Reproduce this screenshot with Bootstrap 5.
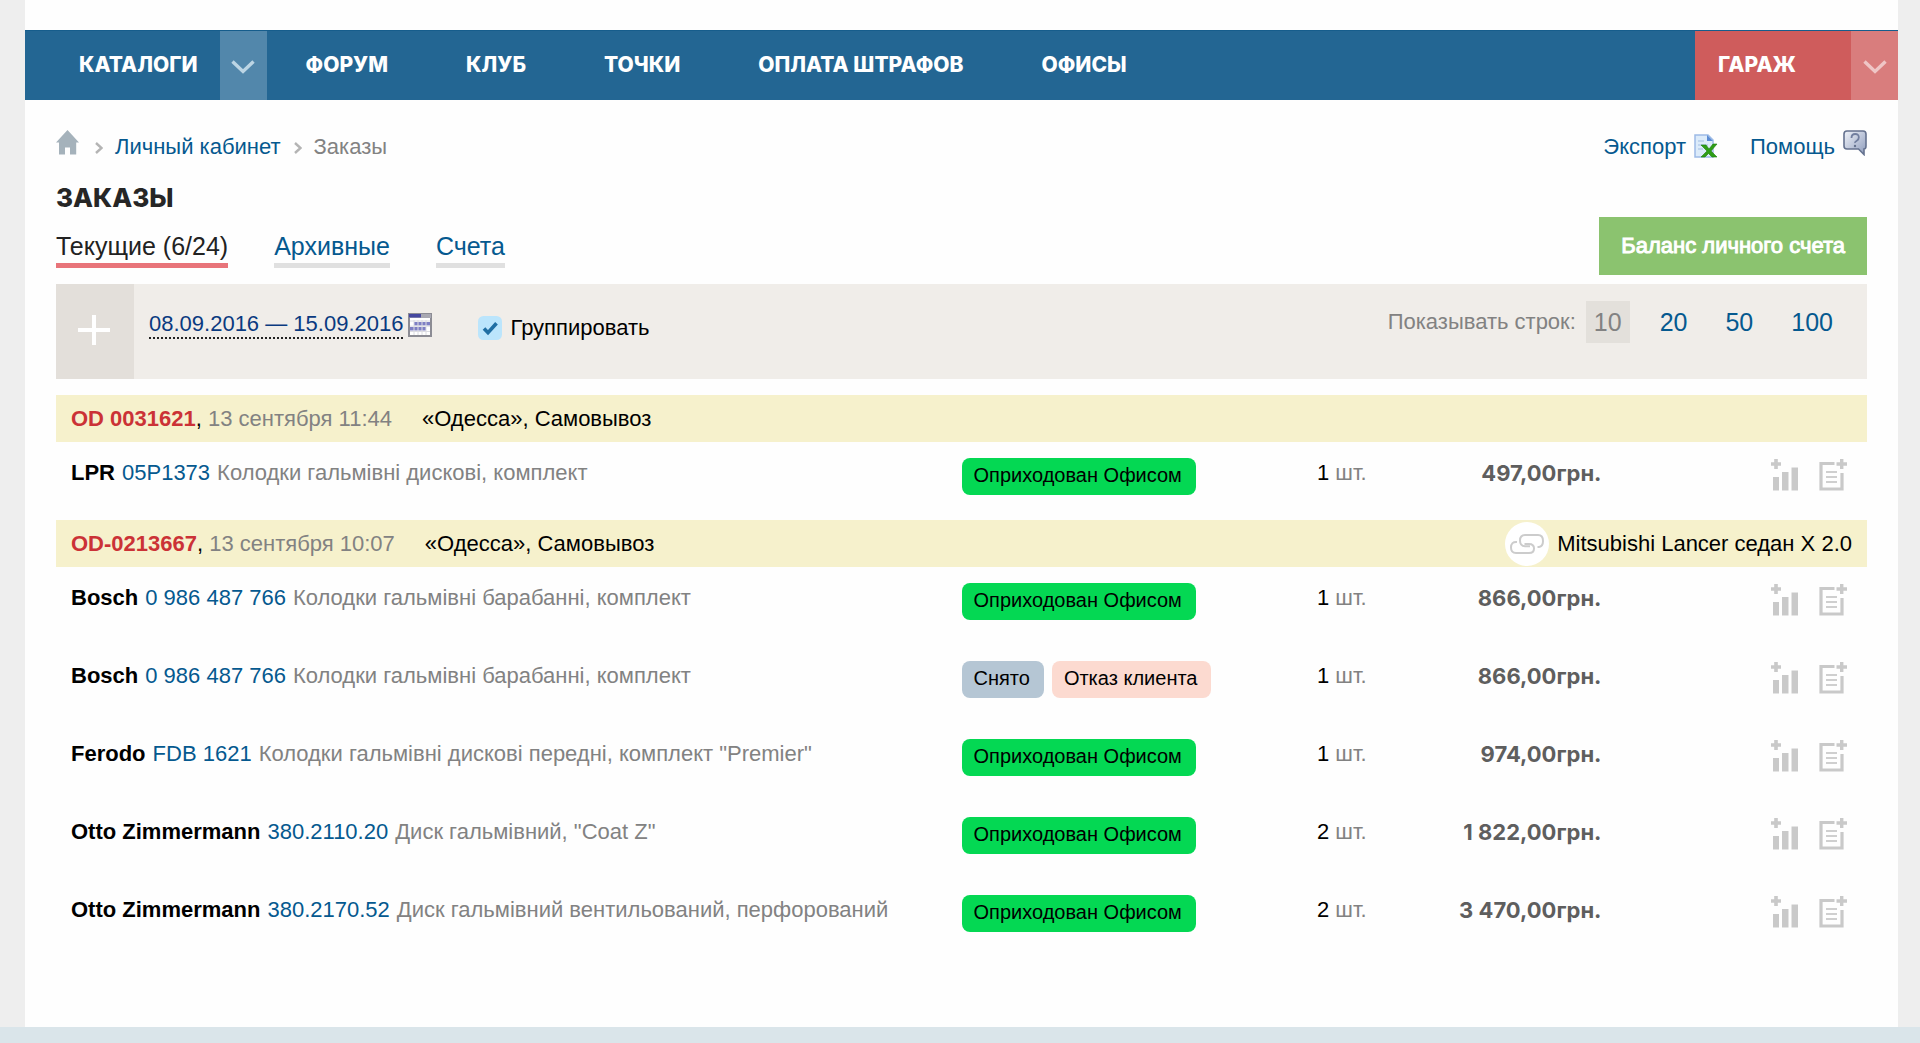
<!DOCTYPE html>
<html lang="ru">
<head>
<meta charset="utf-8">
<meta name="viewport" content="width=device-width, initial-scale=1">
<title>Заказы</title>
<link href="https://cdn.jsdelivr.net/npm/bootstrap@5.3.0/dist/css/bootstrap.min.css" rel="stylesheet">
<style>
:root{--blue:#236693;--link:#05598f;--muted:#828282}
body{background:#eee;font-family:"Liberation Sans",Arial,sans-serif;font-size:22px;line-height:30px;color:#000}
a{color:var(--link);text-decoration:none}
.sheet{background:#fefefe;margin:0 22px 0 25px;padding-top:30px}
.display-font{font-family:Inter,Roboto,sans-serif;font-weight:800}
/* main menu */
.mainmenu{background:var(--blue);height:70px;border-top:1px solid #165d8c;font-size:21px}
.mainmenu a{color:#fff;display:flex;align-items:center;padding:0 39px 1px}
.mainmenu a.first-item{padding-left:54px;padding-right:22px}
.mainmenu button{width:47px;border:0;padding:2px 0 0;color:#bcd5e4;background:#5287ab}
.mainmenu .garage{background:#cf5c5c;width:203px}
.mainmenu .garage a{padding:0 0 1px 23px}
.mainmenu .garage button{background:#d97d7d;color:#efc6c6}
.content-area{padding:0 31px 70px}
.crumbs{padding-top:24px;line-height:30px}
.crumbs .sep{margin:12px 12px 0 13px}
.crumbs .raised{margin-top:6px}
.muted-text{color:var(--muted)}
.heading{font-size:26px;line-height:32px;margin:20px 0 17px;color:#262626}
.tabs-line{gap:46px;font-size:25px;line-height:30px;margin-bottom:7px}
.tabs-line a{border-bottom:5px solid #e0e0e0;padding-bottom:2px}
.tabs-line a.current{border-color:#e8747a;color:#222}
.btn-balance{background:#8bc36f;color:#fff;border:0;border-radius:0;font-size:22px;line-height:34px;padding:12px 22px;-webkit-text-stroke:1px #fff}
.btn-balance:hover{background:#7cb65f;color:#fff}
/* filter strip */
.filterbar{background:#f0ede9;min-height:95px;margin-top:9px}
.filterbar .addbtn{width:78px;border:0;background:#e3dfda;padding:0 2px 2px 0}
.filter-body{padding:17px 26px 0 15px}
.daterange{gap:5px;padding-top:10px}
.datelink{color:#0a3a80;border-bottom:2px dotted #222;line-height:26px}
.grouping{margin-left:46px;gap:8px;padding-top:12px}
.grouping input{width:24px;height:24px;margin:0;border:0;border-radius:0;background-color:#bbe5fc;box-shadow:none}
.grouping input:checked{background-color:#bbe5fc;background-image:url("data:image/svg+xml,%3csvg xmlns='http://www.w3.org/2000/svg' viewBox='0 0 24 24'%3e%3cpath fill='none' stroke='%231f6ea3' stroke-width='3.6' d='M6 12.5l4 4.2 8.500-9.500'/%3e%3c/svg%3e");background-size:contain}
.pager{gap:10px}
.rowcount{gap:22px;font-size:25px;line-height:42px}
.rowcount a,.rowcount span{padding:0 8px}
.rowcount .active-count{background:#e3e0db;color:var(--muted)}
/* orders */
.orders{table-layout:fixed;width:100%;margin-top:16px}
.orders .ordhead td{background:#f6f1cc;height:47px;padding:0 15px;vertical-align:middle}
.ordhead .num{font-weight:700;color:#cb3236}
.ordhead .when{color:var(--muted);margin-right:30px}
.linkdot{width:44px;height:44px;border-radius:50%;background:#fff}
.orders .item td{height:78px;padding:16px 0 0;vertical-align:top}
.orders .item td:first-child{padding-left:15px}
.item .name{gap:7px}
.item td.price{padding-right:12px;text-align:right;color:#5e5e5e;line-height:30px;font-weight:700}
.orders .item td.tools{padding-top:17px;padding-right:20px}
.tools div{gap:20px}
.tools button{border:0;background:none;padding:0}
.orders .item td.price{padding-right:12px}
.state{display:inline-block;border-radius:8px;font-size:20px;line-height:23px;padding:6px 14px 8px 12px}
.st-in{background:#04d853}.st-off{background:#b5c6d4}.st-no{background:#fcdad0}
.footer-strip{height:16px;background:#dae5ea}
svg{display:block;flex:none}
</style>
</head>
<body class="d-flex flex-column min-vh-100">
<svg width="0" height="0" class="position-absolute" aria-hidden="true">
  <defs>
    <symbol id="i-chev" viewBox="0 0 24 14"><path d="M1.500 1.500l10.500 10 10.500-10" fill="none" stroke="currentColor" stroke-width="3.400"/></symbol>
    <symbol id="i-sep" viewBox="0 0 8 12"><path d="M1 1l5.500 5L1 11" fill="none" stroke="#b4b4b4" stroke-width="2.400"/></symbol>
    <symbol id="i-bars" viewBox="0 0 28 32"><g fill="#c9c9c9"><path d="M3.200 0h3.600v3.200H10v3.600H6.800V10H3.200V6.800H0V3.200h3.200z"/><path d="M2 18h6v13.500H2zM11 13h6.500v18.500H11zM20.500 8.500h6.500v23h-6.500z"/></g></symbol>
    <symbol id="i-note" viewBox="0 0 28 32"><path d="M15.500 4.500h-13.500v25.500h21V14" fill="none" stroke="#c9c9c9" stroke-width="3.200"/><path d="M21 0h3.400v3.300H28v3.400h-3.600V10H21V6.700h-3.500V3.300H21z" fill="#c9c9c9"/><path d="M7 13h11M7 18h11M7 23h11" stroke="#cfcfcf" stroke-width="2"/></symbol>
  </defs>
</svg>

<div class="sheet flex-grow-1">
  <nav class="mainmenu display-font d-flex justify-content-between" aria-label="Главное меню">
    <div class="d-flex">
      <a class="first-item" href="#">КАТАЛОГИ</a>
      <button type="button" aria-label="Разделы каталога" class="d-flex align-items-center justify-content-center"><svg width="24" height="14"><use href="#i-chev"/></svg></button>
      <a href="#">ФОРУМ</a><a href="#">КЛУБ</a><a href="#">ТОЧКИ</a><a href="#">ОПЛАТА ШТРАФОВ</a><a href="#">ОФИСЫ</a>
    </div>
    <div class="garage d-flex justify-content-between">
      <a href="#">ГАРАЖ</a>
      <button type="button" aria-label="Открыть гараж" class="d-flex align-items-center justify-content-center"><svg width="24" height="14"><use href="#i-chev"/></svg></button>
    </div>
  </nav>

  <main class="content-area">
    <div class="crumbs d-flex justify-content-between">
      <nav class="d-flex align-items-start" aria-label="Навигация">
        <a href="#" aria-label="Главная"><svg width="23" height="25" viewBox="0 0 23 25" class="raised"><path d="M11.500 0L23 12.500h-2.800V24.500h-6.200v-7H9v7H3V12.500H0z" fill="#a5b2bb"/></svg></a>
        <svg class="sep ms-3" width="8" height="24" viewBox="0 -6 8 24"><use href="#i-sep" width="8" height="12"/></svg>
        <a href="#" class="pt-2">Личный кабинет</a>
        <svg class="sep" width="8" height="24" viewBox="0 -6 8 24"><use href="#i-sep" width="8" height="12"/></svg>
        <span class="muted-text pt-2">Заказы</span>
      </nav>
      <div class="d-flex align-items-start">
        <a href="#" class="d-flex gap-2 me-4 pe-2"><span class="pt-2">Экспорт</span>
          <svg width="24" height="26" viewBox="0 0 24 26" class="mt-2"><path d="M1 3h13l5 5v17H1z" fill="#dcebfa" stroke="#9dbbe6" stroke-width="1.500"/><path d="M13 3v6h6z" fill="#5b8bd4"/><path d="M4 9h6M4 13h10M4 17h5" stroke="#b5cdea" stroke-width="1.500"/><path d="M7 13h5l3 4 4-5h4l-6 7 6 6h-5l-3.500-3.500L11 25H7l6-6z" fill="#2f9e16" stroke="#1d7d0c" stroke-width=".6"/></svg></a>
        <a href="#" class="d-flex gap-2"><span class="pt-2">Помощь</span>
          <svg width="24" height="26" viewBox="0 0 24 26" class="raised"><defs><linearGradient id="gh" x1="0" x2="1" y2="1"><stop offset="0" stop-color="#f0f3f9"/><stop offset="1" stop-color="#8e9cbc"/></linearGradient></defs><path d="M4 1h16q3 0 3 3v12q0 3-2 3v5.500L15.500 19H4q-3 0-3-3V4q0-3 3-3z" fill="url(#gh)" stroke="#65728f" stroke-width="1.600"/><path d="M8.500 8q0-4 3.700-4t3.600 3.500q0 2-2 3.200t-1.800 2.300" fill="none" stroke="#727f9f" stroke-width="1.800"/><circle cx="12" cy="16" r="1.200" fill="#65728f"/></svg></a>
      </div>
    </div>

    <div class="d-flex justify-content-between">
      <div>
        <h1 class="heading display-font">ЗАКАЗЫ</h1>
        <nav class="tabs-line d-flex" aria-label="Разделы заказов">
          <a class="current" href="#">Текущие (6/24)</a><a href="#">Архивные</a><a href="#">Счета</a>
        </nav>
      </div>
      <button type="button" class="btn btn-balance align-self-end">Баланс личного счета</button>
    </div>

    <div class="filterbar d-flex">
      <button type="button" class="addbtn d-flex align-items-center justify-content-center" aria-label="Добавить фильтр"><svg width="32" height="32" viewBox="0 0 32 32"><path d="M16 0v30M0 15h32" stroke="#fff" stroke-width="4"/></svg></button>
      <div class="filter-body d-flex flex-grow-1 align-items-start">
        <div class="daterange d-flex align-items-center">
          <a href="#" class="datelink">08.09.2016 — 15.09.2016</a>
          <svg width="24" height="24" viewBox="0 0 24 24"><path d="M1 1h22v22H1z" fill="#fff" stroke="#8c8c94" stroke-width="2"/><path d="M1 1h22v4H1z" fill="#a8a8b2"/><path d="M1 1h12v3.500H1z" fill="#4648a0"/><path d="M6 9h16v3.500H6zM2 14h16v3.500H2z" fill="#7f80c4"/><path d="M2 13.200h20M2 18.500h20M6 7v15M10 7v15M14 7v15M18 7v15M2 8h20" stroke="#dcdce2" stroke-width="1"/></svg>
        </div>
        <div class="grouping d-flex align-items-center">
          <input class="form-check-input" type="checkbox" id="grp" checked>
          <label for="grp">Группировать</label>
        </div>
        <div class="pager d-flex align-items-center ms-auto">
          <span class="muted-text text-nowrap">Показывать строк:</span>
          <div class="rowcount d-flex"><span class="active-count">10</span><a href="#">20</a><a href="#">50</a><a href="#">100</a></div>
        </div>
      </div>
    </div>

    <table class="orders">
      <colgroup><col style="width:50%"><col style="width:18%"><col style="width:6%"><col style="width:12%"><col style="width:14%"></colgroup>
      <tbody>
        <tr class="ordhead"><td colspan="5"><span class="num">OD 0031621</span>, <span class="when">13 сентября 11:44</span>«Одесса», Самовывоз</td></tr>
        <tr class="item">
          <td><div class="name d-flex"><strong>LPR</strong><a href="#">05P1373</a><span class="muted-text">Колодки гальмівні дискові, комплект</span></div></td>
          <td><span class="state st-in">Оприходован Офисом</span></td>
          <td class="text-center">1 <span class="muted-text">шт.</span></td>
          <td class="price display-font">497,00грн.</td>
          <td class="tools"><div class="d-flex justify-content-end"><button type="button" aria-label="В сравнение"><svg width="28" height="32"><use href="#i-bars"/></svg></button><button type="button" aria-label="В блокнот"><svg width="28" height="32"><use href="#i-note"/></svg></button></div></td>
        </tr>
        <tr class="ordhead"><td colspan="5"><div class="d-flex justify-content-between align-items-center"><div><span class="num">OD-0213667</span>, <span class="when">13 сентября 10:07</span>«Одесса», Самовывоз</div>
          <div class="d-flex align-items-center gap-2"><span class="linkdot d-flex align-items-center justify-content-center"><svg width="34" height="20" viewBox="0 0 34 20" fill="none" stroke="#cccccc" stroke-width="2"><path d="M7 8Q1 7.500 1 13.500 1 19 6 19h13q5 0 5-4.500t-5-4.500h-4.500"/><path d="M27.500 13H29q4-.5 4-6 0-6-5-6H15q-5 0-5 5.500t5 5.800h5"/></svg></span>Mitsubishi Lancer седан X 2.0</div></div></td></tr>
        <tr class="item">
          <td><div class="name d-flex"><strong>Bosch</strong><a href="#">0 986 487 766</a><span class="muted-text">Колодки гальмівні барабанні, комплект</span></div></td>
          <td><span class="state st-in">Оприходован Офисом</span></td>
          <td class="text-center">1 <span class="muted-text">шт.</span></td>
          <td class="price display-font">866,00грн.</td>
          <td class="tools"><div class="d-flex justify-content-end"><button type="button" aria-label="В сравнение"><svg width="28" height="32"><use href="#i-bars"/></svg></button><button type="button" aria-label="В блокнот"><svg width="28" height="32"><use href="#i-note"/></svg></button></div></td>
        </tr>
        <tr class="item">
          <td><div class="name d-flex"><strong>Bosch</strong><a href="#">0 986 487 766</a><span class="muted-text">Колодки гальмівні барабанні, комплект</span></div></td>
          <td><div class="d-flex gap-2"><span class="state st-off">Снято</span><span class="state st-no">Отказ клиента</span></div></td>
          <td class="text-center">1 <span class="muted-text">шт.</span></td>
          <td class="price display-font">866,00грн.</td>
          <td class="tools"><div class="d-flex justify-content-end"><button type="button" aria-label="В сравнение"><svg width="28" height="32"><use href="#i-bars"/></svg></button><button type="button" aria-label="В блокнот"><svg width="28" height="32"><use href="#i-note"/></svg></button></div></td>
        </tr>
        <tr class="item">
          <td><div class="name d-flex"><strong>Ferodo</strong><a href="#">FDB 1621</a><span class="muted-text">Колодки гальмівні дискові передні, комплект "Premier"</span></div></td>
          <td><span class="state st-in">Оприходован Офисом</span></td>
          <td class="text-center">1 <span class="muted-text">шт.</span></td>
          <td class="price display-font">974,00грн.</td>
          <td class="tools"><div class="d-flex justify-content-end"><button type="button" aria-label="В сравнение"><svg width="28" height="32"><use href="#i-bars"/></svg></button><button type="button" aria-label="В блокнот"><svg width="28" height="32"><use href="#i-note"/></svg></button></div></td>
        </tr>
        <tr class="item">
          <td><div class="name d-flex"><strong>Otto Zimmermann</strong><a href="#">380.2110.20</a><span class="muted-text">Диск гальмівний, "Coat Z"</span></div></td>
          <td><span class="state st-in">Оприходован Офисом</span></td>
          <td class="text-center">2 <span class="muted-text">шт.</span></td>
          <td class="price display-font">1 822,00грн.</td>
          <td class="tools"><div class="d-flex justify-content-end"><button type="button" aria-label="В сравнение"><svg width="28" height="32"><use href="#i-bars"/></svg></button><button type="button" aria-label="В блокнот"><svg width="28" height="32"><use href="#i-note"/></svg></button></div></td>
        </tr>
        <tr class="item">
          <td><div class="name d-flex"><strong>Otto Zimmermann</strong><a href="#">380.2170.52</a><span class="muted-text">Диск гальмівний вентильований, перфорований</span></div></td>
          <td><span class="state st-in">Оприходован Офисом</span></td>
          <td class="text-center">2 <span class="muted-text">шт.</span></td>
          <td class="price display-font">3 470,00грн.</td>
          <td class="tools"><div class="d-flex justify-content-end"><button type="button" aria-label="В сравнение"><svg width="28" height="32"><use href="#i-bars"/></svg></button><button type="button" aria-label="В блокнот"><svg width="28" height="32"><use href="#i-note"/></svg></button></div></td>
        </tr>
      </tbody>
    </table>
  </main>
</div>
<footer class="footer-strip"></footer>
<script src="https://cdn.jsdelivr.net/npm/bootstrap@5.3.0/dist/js/bootstrap.bundle.min.js"></script>
</body>
</html>
